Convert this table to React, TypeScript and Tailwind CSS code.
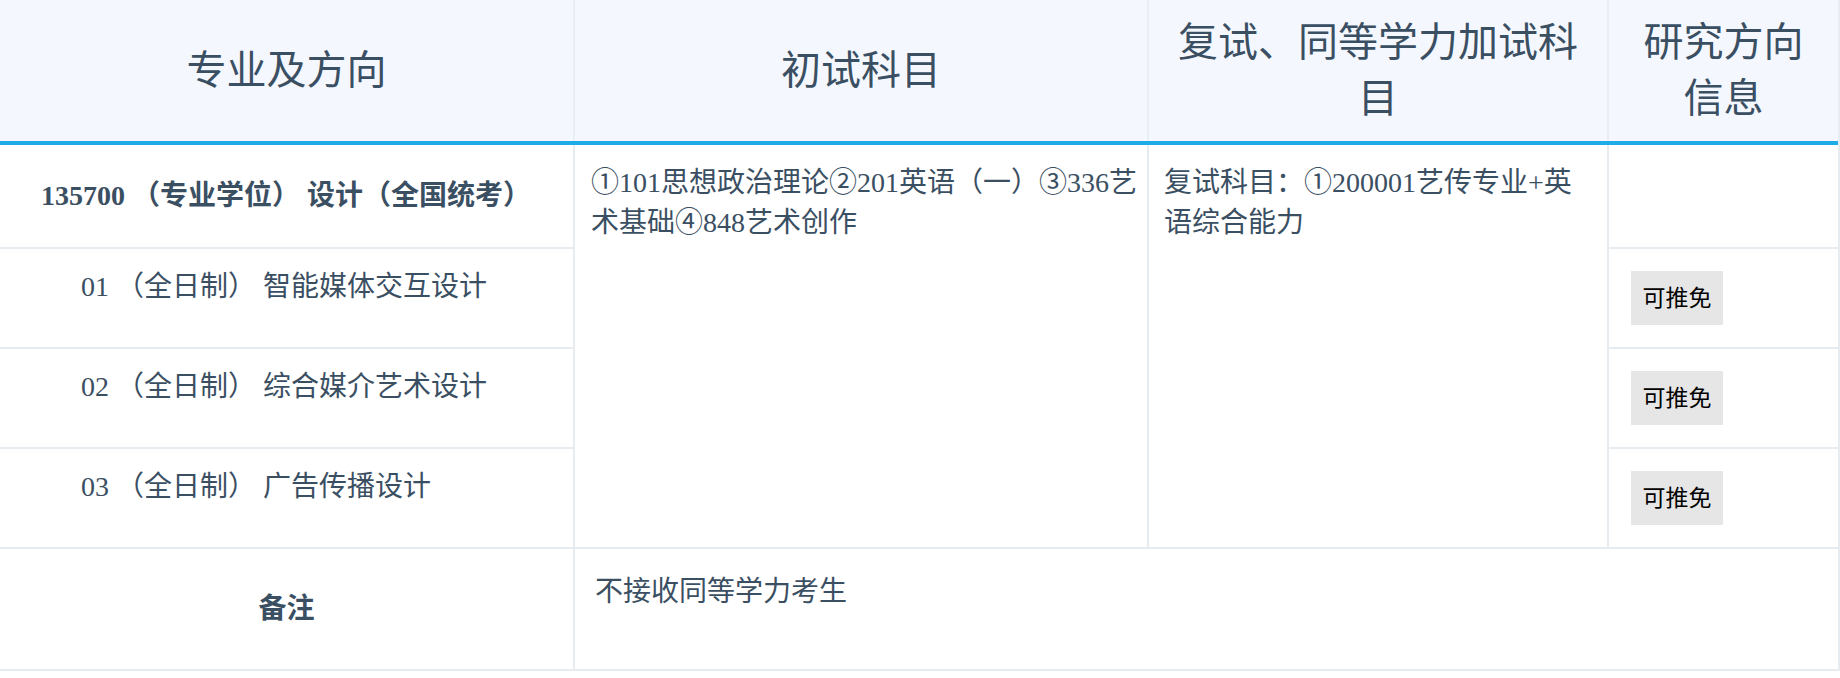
import React from "react";

const Badge = () => (
  <div className="flex h-[54px] w-[92px] items-center justify-center bg-[#e6e6e6] text-[23px] leading-none text-black">
    可推免
  </div>
);

export default function App() {
  return (
    <div className="h-[678px] w-[1840px] bg-white font-['Liberation_Serif','Noto_Sans_CJK_SC',serif] text-[#3b4f63]">
      <div className="w-[1840px] border-r-2 border-[#e6ecf0]">
        <div className="grid h-[145px] grid-cols-[573px_572px_458px_229px] gap-x-[2px] border-b-4 border-[#1eabe6] bg-[#e9eef3]">
          <div className="flex items-center justify-center bg-[#f4f7fe] px-4 text-center text-[40px] leading-[56px]">
            专业及方向
          </div>
          <div className="flex items-center justify-center bg-[#f4f7fe] px-4 text-center text-[40px] leading-[56px]">
            初试科目
          </div>
          <div className="flex items-center justify-center bg-[#f4f7fe] px-4 text-center text-[40px] leading-[56px]">
            复试、同等学力加试科目
          </div>
          <div className="flex items-center justify-center bg-[#f4f7fe] px-4 text-center text-[40px] leading-[56px]">
            研究方向信息
          </div>
        </div>
        <div className="grid grid-cols-[573px_572px_458px_229px] grid-rows-[102px_98px_98px_98px_120px] gap-[2px] border-b-2 border-[#e6ecf0] bg-[#e6ecf0] text-[28px] leading-[40px]">
          <div className="col-start-1 row-start-1 flex items-center bg-white pl-[41px] font-semibold whitespace-nowrap">
            135700 （专业学位） 设计（全国统考）
          </div>
          <div className="col-start-1 row-start-2 bg-white pl-[81px] pt-[18px] whitespace-nowrap">
            01 （全日制） 智能媒体交互设计
          </div>
          <div className="col-start-1 row-start-3 bg-white pl-[81px] pt-[18px] whitespace-nowrap">
            02 （全日制） 综合媒介艺术设计
          </div>
          <div className="col-start-1 row-start-4 bg-white pl-[81px] pt-[18px] whitespace-nowrap">
            03 （全日制） 广告传播设计
          </div>
          <div className="col-start-2 row-span-4 row-start-1 bg-white pl-[16px] pt-[18px] whitespace-nowrap">
            ①101思想政治理论②201英语（一）③336艺
            <br />
            术基础④848艺术创作
          </div>
          <div className="col-start-3 row-span-4 row-start-1 bg-white pl-[15px] pt-[18px] whitespace-nowrap">
            复试科目：①200001艺传专业+英
            <br />
            语综合能力
          </div>
          <div className="col-start-4 row-start-1 bg-white" />
          <div className="col-start-4 row-start-2 flex items-center bg-white pl-[22px]">
            <Badge />
          </div>
          <div className="col-start-4 row-start-3 flex items-center bg-white pl-[22px]">
            <Badge />
          </div>
          <div className="col-start-4 row-start-4 flex items-center bg-white pl-[22px]">
            <Badge />
          </div>
          <div className="col-start-1 row-start-5 flex items-center justify-center bg-white font-semibold">
            备注
          </div>
          <div className="col-span-3 col-start-2 row-start-5 bg-white pl-[20px] pt-[20px] font-['Noto_Sans_CJK_SC',sans-serif]">
            不接收同等学力考生
          </div>
        </div>
      </div>
    </div>
  );
}
